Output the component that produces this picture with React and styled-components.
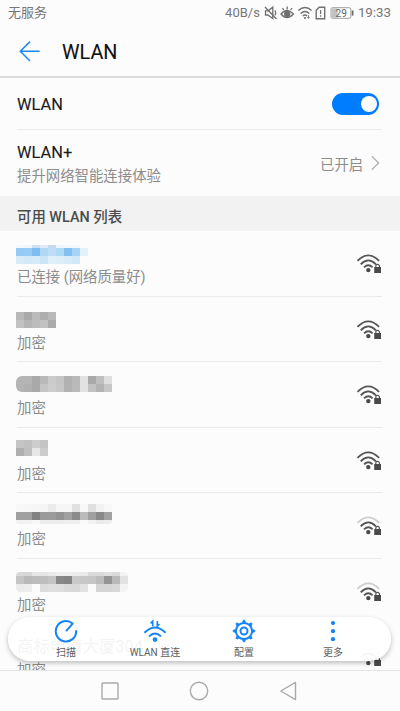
import styled, { createGlobalStyle } from "styled-components";

const GlobalStyle = createGlobalStyle`
  * {
    box-sizing: border-box;
  }
  body {
    margin: 0;
    overflow: hidden;
    background-color: #fcfcfc;
    font-family: Roboto, "Noto Sans CJK SC", sans-serif;
  }
  svg {
    display: block;
    flex: none;
  }
`;

const Phone = styled.div`
  position: relative;
  display: flex;
  flex-direction: column;
  width: 400px;
  height: 711px;
  overflow: hidden;
  background-color: #fcfcfc;
`;

const StatusBar = styled.div`
  display: flex;
  align-items: center;
  justify-content: space-between;
  flex: none;
  height: 25px;
  padding: 0 9px 0 8px;
  color: #777;
  font-size: 13px;
  line-height: 24px;
  white-space: nowrap;
`;
const StatusGroup = styled.div`
  display: flex;
  align-items: center;
`;
const Speed = styled.span`
  margin-right: 4px;
`;
const Clock = styled.span`
  margin-left: 4px;
  font-size: 13.3px;
`;

const Header = styled.div`
  display: flex;
  align-items: center;
  gap: 21px;
  flex: none;
  height: 53px;
  padding-left: 19px;
  border-bottom: 2px solid #dadada;
`;
const Title = styled.h1`
  margin: 0;
  padding-top: 4px;
  color: #111;
  font-size: 19.8px;
  font-weight: 400;
  line-height: 26px;
  -webkit-text-stroke: 0.1px #111;
`;

const Setting = styled.div`
  display: flex;
  align-items: center;
  justify-content: space-between;
  flex: none;
  height: ${(props) => props.$height}px;
  margin: 0 18px 0 17px;
  border-bottom: ${(props) => (props.$line ? "1px solid #ebebeb" : "none")};
`;
const SettingName = styled.div`
  padding-top: 3px;
  color: #1a1a1a;
  font-size: 16.4px;
  line-height: 24px;
  -webkit-text-stroke: 0.1px #1a1a1a;
`;
const Hint = styled.div`
  padding-top: 1px;
  color: #8c8c8c;
  font-size: 14.4px;
  line-height: 22px;
  white-space: nowrap;
`;
const SettingValue = styled.div`
  display: flex;
  align-items: center;
  gap: 7px;
  color: #8c8c8c;
  font-size: 14.3px;
`;

const Switch = styled.div`
  display: flex;
  align-items: center;
  justify-content: flex-end;
  width: 47px;
  height: 22px;
  margin-right: 3px;
  padding-right: 2px;
  border-radius: 11px;
  background-color: #007dff;
`;
const Knob = styled.div`
  width: 16px;
  height: 16px;
  border-radius: 50%;
  background-color: #fff;
`;

const SectionTitle = styled.div`
  flex: none;
  height: 35px;
  padding: 5px 0 0 17px;
  background-color: #f2f2f2;
  color: #4a4a4a;
  font-size: 14.4px;
  font-weight: 500;
  line-height: 34px;
`;

const NetworkList = styled.div`
  flex: 1;
  min-height: 0;
  overflow: hidden;
`;
const NetworkRow = styled.div`
  display: flex;
  justify-content: space-between;
  height: ${(props) => props.$height}px;
  margin: 0 18px 0 17px;
  border-bottom: 1px solid #ebebeb;
`;
const NetworkName = styled.div`
  height: 35px;
  padding-top: ${(props) => props.$top}px;
  color: #222;
  font-size: 16.4px;
  line-height: 24px;
  white-space: nowrap;
`;
const MosaicBox = styled.div`
  margin-left: -1px;
  border-radius: ${(props) => props.$radius ?? "0"};
  overflow: hidden;
`;
const MosaicLine = styled.div`
  display: flex;
  height: ${(props) => props.$height}px;
`;
const MosaicCell = styled.div`
  width: 8px;
  background-color: ${(props) => props.$color};
`;
const Signal = styled.div`
  padding-top: 21px;
`;

const Toolbar = styled.div`
  position: absolute;
  left: 8px;
  top: 617px;
  display: grid;
  grid-template-columns: 116px 62px 116px 62px;
  width: 383px;
  height: 44px;
  border-radius: 22px;
  background-color: rgba(255, 255, 255, 0.95);
  box-shadow: 0 2px 5px rgba(0, 0, 0, 0.26);
`;
const Tool = styled.div`
  display: flex;
  flex-direction: column;
  align-items: center;
  padding-top: 2px;
  color: #606060;
  font-size: 10px;
  line-height: 14px;
  white-space: nowrap;

  span {
    margin-top: 3px;
  }
`;

const NavBar = styled.div`
  display: grid;
  grid-template-columns: repeat(3, 89px);
  justify-content: center;
  align-items: center;
  justify-items: center;
  flex: none;
  height: 41px;
  padding-right: 2px;
  border-top: 1px solid #e4e4e4;
`;

// one string per mosaic line, two hex digits of grey per cell
const grey = (line) => line.split(" ").map((v) => "#" + v.repeat(3));

const networks = [
  {
    height: 66,
    top: 14,
    status: "已连接 (网络质量好)",
    level: 3,
    lines: [
      { h: 3, cells: ["#f4f8fb", "#f2f6fb", "#cfe1f5", "#dfebf7", "#c3daf3", "#eff5fa", "#f3f7fa", "#f3f7fa"] },
      { h: 8, cells: ["#95caf5", "#98ccf5", "#7dbdf1", "#b0d8f5", "#bfdef5", "#addaf5", "#82c0f2", "#a6d3f6", "#e2f1fa"] },
      { h: 8, cells: ["#d8ebf8", "#d4e9f7", "#d6eaf7", "#cbe5f6", "#e0f0f8", "#ddeef8", "#d7ebf8", "#d1e8f8"] },
    ],
  },
  {
    height: 65,
    top: 15,
    status: "加密",
    level: 3,
    lines: [
      { h: 8, cells: grey("b8 a9 bb ae b9") },
      { h: 8, cells: grey("c2 b5 bc c2 ab") },
    ],
  },
  {
    height: 66,
    top: 14,
    status: "加密",
    level: 3,
    rounded: "6px 0 0 6px",
    lines: [
      { h: 8, cells: grey("b5 b5 a9 b9 cb c5 b1 b9 e2 a9 bf df") },
      { h: 8, cells: grey("b4 b0 a9 c5 cd c7 b2 ba e2 c2 b3 c7") },
    ],
  },
  {
    height: 65,
    top: 12,
    status: "加密",
    level: 3,
    lines: [
      { h: 8, cells: grey("c5 c1 cd c4") },
      { h: 8, cells: grey("af bf e7 cc") },
    ],
  },
  {
    height: 66,
    top: 11,
    status: "加密",
    level: 2,
    rounded: "3px",
    lines: [
      { h: 8, cells: grey("f8 f7 f6 f5 eb f6 f6 e1 f8 e0 f2 f8") },
      { h: 8, cells: grey("a0 a0 82 9a 9b 93 a1 8b bb a0 89 a2") },
      { h: 4, cells: grey("f2 f3 f7 ed ed ed ee ee fa f2 ea ed") },
    ],
  },
  {
    height: 65,
    top: 13,
    status: "加密",
    level: 2,
    rounded: "4px",
    lines: [
      { h: 4, cells: grey("d9 d7 e6 e5 ea ee ee ed ea d9 d9 df d9 f3") },
      { h: 8, cells: grey("c5 b9 bc be c4 88 84 c9 c7 c6 bc 94 b9 e2") },
      { h: 8, cells: grey("eb ed fb dc df de d9 d8 e2 fb d5 d5 d8 f3") },
    ],
  },
  { height: 66, status: "加密", level: 2, name: "商标申请大厦304" },
];

function Mosaic({ lines, rounded }) {
  return (
    <MosaicBox $radius={rounded}>
      {lines.map((line, i) => (
        <MosaicLine key={i} $height={line.h}>
          {line.cells.map((color, j) => (
            <MosaicCell key={j} $color={color} />
          ))}
        </MosaicLine>
      ))}
    </MosaicBox>
  );
}

function SignalIcon({ level }) {
  return (
    <svg width="26" height="24" viewBox="0 0 26 24" fill="none" stroke="#555" strokeWidth="1.8">
      <path d="M1.5 8.9Q12.3 -2.2 23.1 8.9" stroke={level > 2 ? "#555" : "#cdcdcd"} />
      <path d="M4.7 12.3Q12.3 4.5 19.9 12.3" />
      <path d="M8 15.4Q12.3 11.1 16.6 15.4" />
      <circle cx="12.3" cy="18.1" r="2.2" fill="#4a4a4a" stroke="none" />
      <path d="M18.2 15h6.8v6h-6.8z" fill="#4a4a4a" stroke="none" />
      <path d="M19.8 15.2v-1.1a1.8 1.8 0 0 1 3.6 0v1.1" strokeWidth="1.2" />
    </svg>
  );
}

function StatusIcons() {
  return (
    <svg width="90" height="16" viewBox="0 0 90 16" fill="none" stroke="#707070" strokeWidth="1.3">
      {/* muted speaker */}
      <path d="M1.5 5.8v4.2h2.3l5 3.6V2.2L4.2 5.8z" />
      <path d="M1 2l11.5 12M11 5.3q1.4 2.4 0 5" />
      {/* eye comfort */}
      <path d="M17 9q6-7 12.4 0q-6.4 7.2-12.4 0z" />
      <circle cx="23.2" cy="9" r="2.5" fill="#707070" />
      <path d="M23.2 1.6v3M18.5 3l1.4 2M28 3l-1.4 2" />
      {/* wifi */}
      <path d="M34.4 5.6q6.6-6 13.2 0M36.7 8.4q4.3-4 8.6 0M38.9 11q2.1-1.9 4.2 0" strokeWidth="1.4" />
      <circle cx="41" cy="13" r="1.1" fill="#707070" stroke="none" />
      <path d="M43.4 12l1.1 1.5 1.1-1.5M44.5 10.2v2.6" strokeWidth="0.9" />
      {/* sim card */}
      <path d="M52.2 5.2l3-2.9h5.5v11.4h-8.5z" strokeWidth="1.4" />
      <path d="M56.6 5.2v3.8M56.6 10.2v1.6" />
      {/* battery */}
      <rect x="67" y="2.7" width="19.8" height="10.6" rx="1.5" strokeWidth="1" stroke="#a0a0a0" />
      <rect x="67.6" y="3.3" width="6" height="9.4" fill="#c2c2c2" stroke="none" />
      <path d="M88.6 5.4v5.2" strokeWidth="1.8" />
      <text x="77.2" y="11.6" textAnchor="middle" fontSize="10" fill="#666" stroke="none">29</text>
    </svg>
  );
}

const ScanIcon = () => (
  <svg width="24" height="24" viewBox="0 0 24 24" fill="none" stroke="#1583f5" strokeWidth="2">
    <path d="M18.6 4.5A10.2 10.2 0 1 0 22.2 12" strokeLinecap="round" />
    <path d="M12 12.2l6.5-7.3" />
  </svg>
);

const DirectIcon = () => (
  <svg width="24" height="24" viewBox="0 0 24 24" fill="none" stroke="#1583f5" strokeWidth="2">
    <path d="M1.4 13.7q10.6-10.5 21.2 0M6 17.4q6-5.8 12 0" />
    <circle cx="12" cy="20.6" r="2.3" fill="#1583f5" stroke="none" />
    <path d="M9.7 7.2V2.2L7.6 4.4M14.3 2v5.2l2.1-2.2" strokeWidth="1.6" />
  </svg>
);

const teeth = [0, 45, 90, 135, 180, 225, 270, 315];

const GearIcon = () => (
  <svg width="24" height="24" viewBox="0 0 24 24" fill="none" stroke="#1583f5" strokeWidth="2">
    <circle cx="12" cy="12" r="8.1" />
    <circle cx="12" cy="12" r="3.5" />
    {teeth.map((angle) => (
      <path
        key={angle}
        d="M10.5 3.6l.8-2.4h1.4l.8 2.4z"
        fill="#1583f5"
        strokeWidth="0.8"
        strokeLinejoin="round"
        transform={`rotate(${angle} 12 12)`}
      />
    ))}
  </svg>
);

const MoreIcon = () => (
  <svg width="24" height="24" viewBox="0 0 24 24" fill="#1583f5">
    <circle cx="12" cy="4" r="2.1" />
    <circle cx="12" cy="12.2" r="2.1" />
    <circle cx="12" cy="20.2" r="2.1" />
  </svg>
);

const tools = [
  { label: "扫描", Icon: ScanIcon },
  { label: "WLAN 直连", Icon: DirectIcon },
  { label: "配置", Icon: GearIcon },
  { label: "更多", Icon: MoreIcon },
];

export default function App() {
  return (
    <>
      <GlobalStyle />
      <Phone>
        <StatusBar>
          <span>无服务</span>
          <StatusGroup>
            <Speed>40B/s</Speed>
            <StatusIcons />
            <Clock>19:33</Clock>
          </StatusGroup>
        </StatusBar>

        <Header>
          <svg width="22" height="22" viewBox="0 0 22 22" fill="none" stroke="#1b88f5" strokeWidth="1.5">
            <path d="M11 1.6L1.3 11.3l9.7 9.7M1.3 11.3h19.4" />
          </svg>
          <Title>WLAN</Title>
        </Header>

        <Setting $height={52} $line>
          <SettingName>WLAN</SettingName>
          <Switch>
            <Knob />
          </Switch>
        </Setting>
        <Setting $height={66}>
          <div>
            <SettingName>WLAN+</SettingName>
            <Hint>提升网络智能连接体验</Hint>
          </div>
          <SettingValue>
            已开启
            <svg width="12" height="16" viewBox="0 0 12 16" fill="none" stroke="#b5b5b5" strokeWidth="1.4">
              <path d="M1.8 1.2l6.8 6.8-6.8 6.8" />
            </svg>
          </SettingValue>
        </Setting>

        <SectionTitle>可用 WLAN 列表</SectionTitle>
        <NetworkList>
          {networks.map((network, i) => (
            <NetworkRow key={i} $height={network.height}>
              <div>
                <NetworkName $top={network.top ?? 11}>
                  {network.name ?? <Mosaic lines={network.lines} rounded={network.rounded} />}
                </NetworkName>
                <Hint>{network.status}</Hint>
              </div>
              <Signal>
                <SignalIcon level={network.level} />
              </Signal>
            </NetworkRow>
          ))}
        </NetworkList>

        <Toolbar>
          {tools.map(({ label, Icon }) => (
            <Tool key={label}>
              <Icon />
              <span>{label}</span>
            </Tool>
          ))}
        </Toolbar>

        <NavBar>
          <svg width="18" height="18" viewBox="0 0 18 18" fill="none" stroke="#aaa" strokeWidth="1.4">
            <rect x="1" y="1" width="16" height="16" rx="0.8" />
          </svg>
          <svg width="20" height="20" viewBox="0 0 20 20" fill="none" stroke="#aaa" strokeWidth="1.4">
            <circle cx="10" cy="10" r="8.7" />
          </svg>
          <svg width="18" height="20" viewBox="0 0 18 20" fill="none" stroke="#aaa" strokeWidth="1.4">
            <path d="M16.5 1.4v17.2L1.8 10z" strokeLinejoin="round" />
          </svg>
        </NavBar>
      </Phone>
    </>
  );
}
